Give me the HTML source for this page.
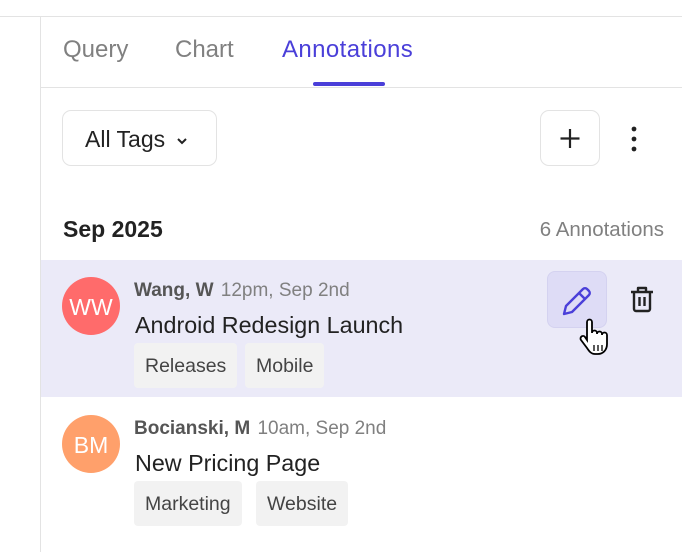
<!DOCTYPE html>
<html><head><style>
*{margin:0;padding:0;box-sizing:border-box}
body{width:682px;height:552px;background:#fff;font-family:"Liberation Sans",sans-serif;position:relative;overflow:hidden;color:#222}
.a{position:absolute;white-space:nowrap}
.tag{position:absolute;height:45px;background:#f2f2f2;border-radius:4px;font-size:19.5px;color:#444;line-height:47px;padding:0 11px}
.av{position:absolute;width:58px;height:58px;border-radius:50%;color:#fff;font-size:23px;text-align:center;line-height:60px}
</style></head><body>
<div class="a" style="left:0;top:16px;width:682px;height:1px;background:#e3e3e3"></div>
<div class="a" style="left:40px;top:16px;width:1px;height:536px;background:#e3e3e3"></div>
<div class="a" style="left:40px;top:87px;width:642px;height:1px;background:#e3e3e3"></div>
<div class="a" style="left:63px;top:36px;font-size:24px;color:#808080">Query</div>
<div class="a" style="left:175px;top:36px;font-size:24px;color:#808080">Chart</div>
<div class="a" style="left:282px;top:36px;font-size:24px;color:#4a3fd9;letter-spacing:0.4px">Annotations</div>
<div class="a" style="left:313px;top:82px;width:72px;height:4px;border-radius:2px;background:#4a3fd9"></div>
<div class="a" style="left:62px;top:110px;width:155px;height:56px;border:1px solid #e3e3e3;border-radius:9px;font-size:23px;line-height:56px;padding-left:22px;color:#222">All Tags <svg width="12" height="8" viewBox="0 0 12 8" style="margin-left:4px;vertical-align:middle"><path d="M2 2l4 4 4-4" stroke="#222" stroke-width="2" fill="none"/></svg></div>
<div class="a" style="left:540px;top:110px;width:60px;height:56px;border:1px solid #e3e3e3;border-radius:9px"><svg width="58" height="54" viewBox="0 0 58 54"><path d="M29 18v19M19.5 27.5h19" stroke="#222" stroke-width="2.2"/></svg></div>
<svg class="a" style="left:628px;top:126px" width="12" height="26"><circle cx="6" cy="3" r="2.4" fill="#222"/><circle cx="6" cy="13" r="2.4" fill="#222"/><circle cx="6" cy="23" r="2.4" fill="#222"/></svg>
<div class="a" style="left:63px;top:216px;font-size:23px;font-weight:bold;color:#222">Sep 2025</div>
<div class="a" style="right:18px;top:218px;font-size:20.5px;color:#808080">6 Annotations</div>
<div class="a" style="left:41px;top:260px;width:641px;height:137px;background:#ebeaf8"></div>
<div class="av" style="left:62px;top:277px;background:#ff6b6b">WW</div>
<div class="a" style="left:134px;top:280px;font-size:19px"><b style="color:#555">Wang, W</b> <span style="color:#808080;margin-left:2px">12pm, Sep 2nd</span></div>
<div class="a" style="left:135px;top:312px;font-size:23.3px;color:#222">Android Redesign Launch</div>
<div class="tag" style="left:134px;top:343px">Releases</div>
<div class="tag" style="left:245px;top:343px">Mobile</div>
<div class="a" style="left:547px;top:271px;width:60px;height:57px;background:#dedcf6;border:1px solid #d4d2f0;border-radius:8px"><svg width="58" height="55" viewBox="0 0 58 55"><path d="M16 42l2-8 17-17a3 3 0 014 0l2 2a3 3 0 010 4L24 40zM31 21l6 6" stroke="#4a3fd9" stroke-width="2.4" fill="none" stroke-linejoin="round"/></svg></div>
<svg class="a" style="left:577px;top:318px" width="36" height="40" viewBox="0 0 36 40"><path d="M10 4a2.5 2.5 0 015 0v11a2.5 2.5 0 015 0v1a2.5 2.5 0 015 0v1a2.5 2.5 0 015 0v9c0 6-4 10-9 10h-3c-4 0-6-3-8-6l-6-8a2.5 2.5 0 014-3l2 3z" fill="#fff" stroke="#000" stroke-width="1.8"/><path d="M17 27v6M21 27v6M25 27v6" stroke="#000" stroke-width="1.3"/></svg>
<svg class="a" style="left:627px;top:284px" width="30" height="30" viewBox="0 0 30 30"><path d="M4 8h22M11 8V4h8v4M7 8v17a2 2 0 002 2h12a2 2 0 002-2V8M12.5 13v9M17.5 13v9" stroke="#222" stroke-width="2.4" fill="none" stroke-linejoin="round"/></svg>
<div class="av" style="left:62px;top:415px;background:#ffa06b">BM</div>
<div class="a" style="left:134px;top:418px;font-size:19px"><b style="color:#555">Bocianski, M</b> <span style="color:#808080;margin-left:2px">10am, Sep 2nd</span></div>
<div class="a" style="left:135px;top:450px;font-size:23.3px;color:#222">New Pricing Page</div>
<div class="tag" style="left:134px;top:481px">Marketing</div>
<div class="tag" style="left:256px;top:481px">Website</div>
</body></html>
